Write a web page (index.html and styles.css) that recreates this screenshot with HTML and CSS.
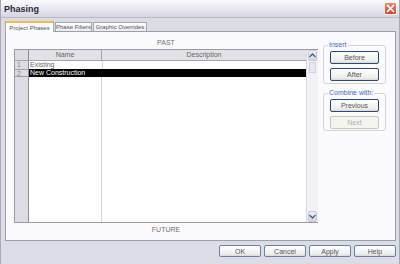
FILE: index.html
```html
<!DOCTYPE html>
<html lang="en">
<head>
  <meta charset="UTF-8">
  <title>Phasing</title>
  <link rel="stylesheet" href="styles.css">
</head>
<body>
  <div class="window">
    <div class="titlebar">
      <span class="title">Phasing</span>
      <span class="close">
        <svg width="9" height="9" viewBox="0 0 9 9"><path d="M1.5 1.5 L7.5 7.5 M7.5 1.5 L1.5 7.5" stroke="#fff" stroke-width="1.6" stroke-linecap="square"/></svg>
      </span>
    </div>

    <div class="content">
      <div class="tabs">
        <div class="tab active">Project Phases</div>
        <div class="tab">Phase Filters</div>
        <div class="tab">Graphic Overrides</div>
      </div>

      <div class="panel">
        <div class="grid-area">
          <div class="caption">PAST</div>
          <div class="grid">
            <div class="table">
              <div class="row header">
                <div class="cell num"></div>
                <div class="cell name">Name</div>
                <div class="cell desc">Description</div>
              </div>
              <div class="row">
                <div class="cell num">1</div>
                <div class="cell name left">Existing</div>
                <div class="cell desc"></div>
              </div>
              <div class="row selected">
                <div class="cell num">2</div>
                <div class="cell name left">New Construction</div>
                <div class="cell desc"></div>
              </div>
              <div class="row filler">
                <div class="cell num"></div>
                <div class="cell name"></div>
                <div class="cell desc"></div>
              </div>
            </div>
            <div class="scrollbar">
              <div class="arrow">
                <svg width="7" height="5" viewBox="0 0 7 5"><path d="M0.5 4 L3.5 1 L6.5 4" fill="none" stroke="#4d6185" stroke-width="1.4"/></svg>
              </div>
              <div class="thumb"></div>
              <div class="track"></div>
              <div class="arrow">
                <svg width="7" height="5" viewBox="0 0 7 5"><path d="M0.5 1 L3.5 4 L6.5 1" fill="none" stroke="#4d6185" stroke-width="1.4"/></svg>
              </div>
            </div>
          </div>
          <div class="caption">FUTURE</div>
        </div>

        <div class="side">
          <fieldset class="group">
            <legend>Insert</legend>
            <button class="btn">Before</button>
            <button class="btn">After</button>
          </fieldset>
          <fieldset class="group">
            <legend>Combine with:</legend>
            <button class="btn">Previous</button>
            <button class="btn" disabled>Next</button>
          </fieldset>
        </div>
      </div>

      <div class="footer">
        <button class="btn wide">OK</button>
        <button class="btn wide">Cancel</button>
        <button class="btn wide">Apply</button>
        <button class="btn wide">Help</button>
      </div>
    </div>
  </div>
</body>
</html>
```

FILE: styles.css
```css
body {
  margin: 0;
  padding: 0;
  font-family: "Liberation Sans", Arial, sans-serif;
  font-size: 8px;
  color: #666;
  background-color: #dcdce4;
}

.window {
  width: 400px;
  height: 264px;
  display: flex;
  flex-direction: column;
  box-sizing: border-box;
  border-left: 1px solid #a8a8b8;
  border-right: 1px solid #a8a8b8;
}

.titlebar {
  height: 17px;
  display: flex;
  align-items: center;
  justify-content: space-between;
  padding: 0 2px 0 3px;
  background: linear-gradient(#fbfbfe, #e4e4ee 60%, #d6d6e2);
  border-bottom: 1px solid #b8b8c8;
}

.title {
  font-size: 9px;
  font-weight: bold;
  color: #2a2a3a;
}

.close {
  width: 13px;
  height: 13px;
  box-sizing: border-box;
  display: flex;
  align-items: center;
  justify-content: center;
  border: 1px solid #f4f4f4;
  border-radius: 2px;
  background: linear-gradient(#e88a6e, #d2452a);
}

.content {
  flex: 1;
  display: flex;
  flex-direction: column;
  padding: 3px 3px 0 4px;
}

.tabs {
  display: flex;
  height: 10px;
  align-items: flex-end;
}

.tab {
  height: 9px;
  line-height: 9px;
  font-size: 6px;
  text-align: center;
  white-space: nowrap;
  color: #555;
  background: linear-gradient(#fdfdfd, #ececec);
  border: 1px solid #a0a8b0;
  border-bottom: none;
  margin-right: 1px;
  box-sizing: border-box;
}

.tab:nth-child(1) { width: 49px; }
.tab:nth-child(2) { width: 37px; }
.tab:nth-child(3) { width: 54px; }

.tab.active {
  height: 11px;
  line-height: 10px;
  background: #fcfcfe;
  border-top: 2px solid #f5b84a;
  margin-bottom: -1px;
  position: relative;
}

.panel {
  height: 210px;
  display: flex;
  background: #fbfbfd;
  border: 1px solid #9aa0aa;
  box-sizing: border-box;
  padding: 0 9px 0 8px;
}

.grid-area {
  width: 304px;
  display: flex;
  flex-direction: column;
}

.caption {
  height: 11px;
  line-height: 11px;
  text-align: center;
  font-size: 7px;
  color: #707070;
}

.caption:first-child {
  margin-top: 5px;
  margin-bottom: 1px;
}

.caption:last-child {
  margin-top: 1px;
}

.grid {
  height: 174px;
  display: flex;
  border: 1px solid #9a9aa4;
  border-right: none;
  box-sizing: border-box;
  background: #fff;
}

.table {
  flex: 1;
  display: flex;
  flex-direction: column;
}

.row {
  display: flex;
  height: 8px;
  line-height: 8px;
}

.row.header {
  height: 10px;
  line-height: 10px;
  background: #e2e2e6;
  border-bottom: 1px solid #a4a4ac;
}

.row.filler {
  flex: 1;
}

.cell {
  font-size: 7px;
  text-align: center;
  white-space: nowrap;
  overflow: hidden;
}

.cell.num {
  width: 14px;
  text-align: left;
  padding-left: 2px;
  box-sizing: border-box;
  background: #dcdce2;
  border-right: 1px solid #8c8c94;
  color: #888;
}

.cell.name {
  width: 72px;
  border-right: 1px solid #d6d6da;
}

.cell.desc {
  flex: 1;
}

.header .cell.name {
  border-right: 1px solid #a4a4ac;
}

.cell.left {
  text-align: left;
  padding-left: 1px;
}

.row.selected .cell.name,
.row.selected .cell.desc {
  background: #000;
  color: #fff;
  border-right-color: #000;
}

.row.selected .cell.num {
  border-top: 1px solid #9c9ca4;
  border-bottom: 1px solid #9c9ca4;
}

.scrollbar {
  width: 11px;
  display: flex;
  flex-direction: column;
  background: #f2f2f4;
  border-left: 1px solid #d8d8de;
}

.arrow {
  height: 9px;
  display: flex;
  align-items: center;
  justify-content: center;
  margin: 0 1px;
  background: linear-gradient(#eef0f6, #d4d8e4);
  border: 1px solid #c4c8d4;
  border-radius: 2px;
}

.thumb {
  height: 9px;
  margin: 1px 2px 0;
  background: #e6e8ee;
  border: 1px solid #cfd2dc;
}

.track {
  flex: 1;
}

.side {
  margin-left: 5px;
  display: flex;
  flex-direction: column;
}

.group {
  width: 63px;
  box-sizing: border-box;
  margin: 0;
  padding: 2px 0 3px 6px;
  border: 1px solid #d2d2d8;
  border-radius: 3px;
  display: flex;
  flex-direction: column;
  gap: 4px;
}

.group:first-child {
  margin-top: 9px;
  height: 43px;
}

.group:last-child {
  margin-top: 5px;
  height: 42px;
}

.group legend {
  padding: 0 1px;
  margin-left: -2px;
  font-size: 7px;
  line-height: 8px;
  color: #3a6ad0;
}

.btn {
  width: 49px;
  height: 13px;
  padding: 0;
  font-family: "Liberation Sans", Arial, sans-serif;
  font-size: 7px;
  color: #555;
  background: linear-gradient(#ffffff, #eeeeec 80%, #d8d8d4);
  border: 1px solid #2a4a7a;
  border-radius: 2px;
}

.btn:disabled {
  color: #b0b0a8;
  border-color: #c8c8c0;
  background: #f4f4f0;
}

.footer {
  display: flex;
  justify-content: flex-end;
  gap: 3px;
  padding-top: 4px;
}

.btn.wide {
  width: 42px;
  height: 12px;
  border-color: #6a7ea8;
}
```
